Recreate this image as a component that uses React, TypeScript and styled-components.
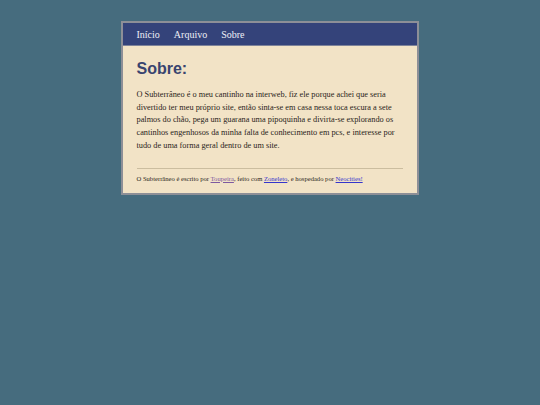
import React from "react";
import styled, { createGlobalStyle } from "styled-components";

const Global = createGlobalStyle`
  html, body {
    margin: 0;
    padding: 0;
    background: #466c7e;
  }
  body {
    font-family: "Liberation Serif", Georgia, serif;
  }
`;

const Page = styled.div`
  padding-top: 21px;
  display: flex;
  justify-content: center;
`;

const Container = styled.div`
  width: 294px;
  border: 2px solid #8d8f97;
  background: #f2e3c6;
  margin-right: 1px;
`;

const Nav = styled.nav`
  background: #34437a;
  height: 22px;
  display: flex;
  align-items: center;
  gap: 14px;
  padding-left: 14px;
  border-bottom: 1px solid #7e8399;
`;

const NavLink = styled.a`
  color: #eef0f7;
  font-family: "Liberation Serif", Georgia, serif;
  font-size: 10px;
  text-decoration: none;
`;

const Content = styled.main`
  padding: 14px 14px 11px 14px;
`;

const Title = styled.h1`
  font-family: "Liberation Sans", Arial, sans-serif;
  font-weight: bold;
  font-size: 16px;
  color: #39446f;
  margin: 0 0 11px 0;
`;

const Paragraph = styled.p`
  font-size: 8.3px;
  line-height: 12.7px;
  color: #2a2420;
  margin: 0 0 15px 0;
`;

const Rule = styled.hr`
  border: none;
  border-top: 1px solid #cbbd9f;
  margin: 0 0 6px 0;
`;

const Footer = styled.footer`
  font-size: 6.6px;
  color: #2a2420;
`;

const FooterLink = styled.a<{ $visited?: boolean }>`
  color: ${(p) => (p.$visited ? "#7d5aa0" : "#3535cc")};
  text-decoration: underline;
`;

export default function App() {
  return (
    <>
      <Global />
      <Page>
        <Container>
          <Nav>
            <NavLink href="#">Início</NavLink>
            <NavLink href="#">Arquivo</NavLink>
            <NavLink href="#">Sobre</NavLink>
          </Nav>
          <Content>
            <Title>Sobre:</Title>
            <Paragraph>
              O Subterrâneo é o meu cantinho na interweb, fiz ele porque achei que seria
              divertido ter meu próprio site, então sinta-se em casa nessa toca escura a sete
              palmos do chão, pega um guarana uma pipoquinha e divirta-se explorando os
              cantinhos engenhosos da minha falta de conhecimento em pcs, e interesse por
              tudo de uma forma geral dentro de um site.
            </Paragraph>
            <Rule />
            <Footer>
              O Subterrâneo é escrito por <FooterLink href="#" $visited>Toupeira</FooterLink>, feito com{" "}
              <FooterLink href="#">Zoneleto</FooterLink>, e hospedado por{" "}
              <FooterLink href="#">Neocities!</FooterLink>
            </Footer>
          </Content>
        </Container>
      </Page>
    </>
  );
}
